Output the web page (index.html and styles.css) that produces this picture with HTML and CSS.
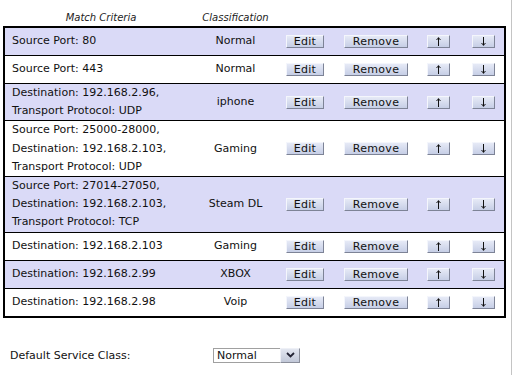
FILE: index.html
```html
<!DOCTYPE html>
<html>
<head>
<meta charset="utf-8">
<link rel="stylesheet" href="styles.css">
</head>
<body>
<div class="page">
  <table class="rules">
    <colgroup>
      <col class="w-crit"><col class="w-class"><col class="w-edit"><col class="w-remove"><col class="w-up"><col class="w-down">
    </colgroup>
    <thead>
      <tr><th>Match Criteria</th><th>Classification</th><th></th><th></th><th></th><th></th></tr>
    </thead>
    <tbody>
      <tr class="alt">
        <td class="crit">Source Port: 80</td><td class="cls">Normal</td>
        <td><button class="btn b-edit">Edit</button></td><td><button class="btn b-remove">Remove</button></td>
        <td><button class="btn b-arrow"><svg width="7" height="9" viewBox="0 0 7 9"><path d="M3.5 0.5V9M1.5 3L3.5 0.8L5.5 3" fill="none" stroke="#111" stroke-width="1"/></svg></button></td>
        <td><button class="btn b-arrow"><svg width="7" height="9" viewBox="0 0 7 9"><path d="M3.5 0V8.5M1.5 6L3.5 8.2L5.5 6" fill="none" stroke="#111" stroke-width="1"/></svg></button></td>
      </tr>
      <tr>
        <td class="crit">Source Port: 443</td><td class="cls">Normal</td>
        <td><button class="btn b-edit">Edit</button></td><td><button class="btn b-remove">Remove</button></td>
        <td><button class="btn b-arrow"><svg width="7" height="9" viewBox="0 0 7 9"><path d="M3.5 0.5V9M1.5 3L3.5 0.8L5.5 3" fill="none" stroke="#111" stroke-width="1"/></svg></button></td>
        <td><button class="btn b-arrow"><svg width="7" height="9" viewBox="0 0 7 9"><path d="M3.5 0V8.5M1.5 6L3.5 8.2L5.5 6" fill="none" stroke="#111" stroke-width="1"/></svg></button></td>
      </tr>
      <tr class="alt">
        <td class="crit">Destination: 192.168.2.96,<br>Transport Protocol: UDP</td><td class="cls">iphone</td>
        <td><button class="btn b-edit">Edit</button></td><td><button class="btn b-remove">Remove</button></td>
        <td><button class="btn b-arrow"><svg width="7" height="9" viewBox="0 0 7 9"><path d="M3.5 0.5V9M1.5 3L3.5 0.8L5.5 3" fill="none" stroke="#111" stroke-width="1"/></svg></button></td>
        <td><button class="btn b-arrow"><svg width="7" height="9" viewBox="0 0 7 9"><path d="M3.5 0V8.5M1.5 6L3.5 8.2L5.5 6" fill="none" stroke="#111" stroke-width="1"/></svg></button></td>
      </tr>
      <tr>
        <td class="crit">Source Port: 25000-28000,<br>Destination: 192.168.2.103,<br>Transport Protocol: UDP</td><td class="cls">Gaming</td>
        <td><button class="btn b-edit">Edit</button></td><td><button class="btn b-remove">Remove</button></td>
        <td><button class="btn b-arrow"><svg width="7" height="9" viewBox="0 0 7 9"><path d="M3.5 0.5V9M1.5 3L3.5 0.8L5.5 3" fill="none" stroke="#111" stroke-width="1"/></svg></button></td>
        <td><button class="btn b-arrow"><svg width="7" height="9" viewBox="0 0 7 9"><path d="M3.5 0V8.5M1.5 6L3.5 8.2L5.5 6" fill="none" stroke="#111" stroke-width="1"/></svg></button></td>
      </tr>
      <tr class="alt">
        <td class="crit">Source Port: 27014-27050,<br>Destination: 192.168.2.103,<br>Transport Protocol: TCP</td><td class="cls">Steam DL</td>
        <td><button class="btn b-edit">Edit</button></td><td><button class="btn b-remove">Remove</button></td>
        <td><button class="btn b-arrow"><svg width="7" height="9" viewBox="0 0 7 9"><path d="M3.5 0.5V9M1.5 3L3.5 0.8L5.5 3" fill="none" stroke="#111" stroke-width="1"/></svg></button></td>
        <td><button class="btn b-arrow"><svg width="7" height="9" viewBox="0 0 7 9"><path d="M3.5 0V8.5M1.5 6L3.5 8.2L5.5 6" fill="none" stroke="#111" stroke-width="1"/></svg></button></td>
      </tr>
      <tr>
        <td class="crit">Destination: 192.168.2.103</td><td class="cls">Gaming</td>
        <td><button class="btn b-edit">Edit</button></td><td><button class="btn b-remove">Remove</button></td>
        <td><button class="btn b-arrow"><svg width="7" height="9" viewBox="0 0 7 9"><path d="M3.5 0.5V9M1.5 3L3.5 0.8L5.5 3" fill="none" stroke="#111" stroke-width="1"/></svg></button></td>
        <td><button class="btn b-arrow"><svg width="7" height="9" viewBox="0 0 7 9"><path d="M3.5 0V8.5M1.5 6L3.5 8.2L5.5 6" fill="none" stroke="#111" stroke-width="1"/></svg></button></td>
      </tr>
      <tr class="alt">
        <td class="crit">Destination: 192.168.2.99</td><td class="cls">XBOX</td>
        <td><button class="btn b-edit">Edit</button></td><td><button class="btn b-remove">Remove</button></td>
        <td><button class="btn b-arrow"><svg width="7" height="9" viewBox="0 0 7 9"><path d="M3.5 0.5V9M1.5 3L3.5 0.8L5.5 3" fill="none" stroke="#111" stroke-width="1"/></svg></button></td>
        <td><button class="btn b-arrow"><svg width="7" height="9" viewBox="0 0 7 9"><path d="M3.5 0V8.5M1.5 6L3.5 8.2L5.5 6" fill="none" stroke="#111" stroke-width="1"/></svg></button></td>
      </tr>
      <tr>
        <td class="crit">Destination: 192.168.2.98</td><td class="cls">Voip</td>
        <td><button class="btn b-edit">Edit</button></td><td><button class="btn b-remove">Remove</button></td>
        <td><button class="btn b-arrow"><svg width="7" height="9" viewBox="0 0 7 9"><path d="M3.5 0.5V9M1.5 3L3.5 0.8L5.5 3" fill="none" stroke="#111" stroke-width="1"/></svg></button></td>
        <td><button class="btn b-arrow"><svg width="7" height="9" viewBox="0 0 7 9"><path d="M3.5 0V8.5M1.5 6L3.5 8.2L5.5 6" fill="none" stroke="#111" stroke-width="1"/></svg></button></td>
      </tr>
    </tbody>
  </table>

  <div class="default-row">
    <span class="default-label">Default Service Class:</span>
    <div class="select">
      <span class="select-value">Normal</span>
      <span class="select-btn"><svg width="9" height="6" viewBox="0 0 9 6"><path d="M1 1L4.5 4.5L8 1" fill="none" stroke="#223" stroke-width="1.8"/></svg></span>
    </div>
  </div>
</div>
</body>
</html>
```
FILE: styles.css
```css
html, body {
  margin: 0;
  padding: 0;
  background: #fff;
}
body {
  font-family: "DejaVu Sans", Verdana, sans-serif;
  font-size: 11px;
  color: #111;
}
.page {
  width: 512px;
  height: 375px;
  border-right: 1px solid #c4c4c4;
  box-sizing: border-box;
  padding-top: 8px;
}
.rules {
  margin-left: 3px;
  width: 501px;
  table-layout: fixed;
  border-collapse: collapse;
}
.w-crit { width: 194px; }
.w-class { width: 75px; }
.w-edit { width: 64px; }
.w-remove { width: 78px; }
.w-up { width: 47px; }
.w-down { width: 43px; }

.rules th {
  font-weight: normal;
  font-style: italic;
  font-size: 10px;
  color: #222;
  height: 18px;
  padding: 0;
  text-align: center;
  vertical-align: middle;
}
.rules td {
  padding: 0;
  height: 27px;
  line-height: 18.2px;
  border-top: 1px solid #000;
  border-bottom: 1px solid #000;
  text-align: center;
  vertical-align: middle;
}
.rules td:first-child { border-left: 2px solid #000; }
.rules td:last-child { border-right: 2px solid #000; }
.rules tbody tr:first-child td { border-top: 2px solid #000; }
.rules tbody tr:last-child td { border-bottom: 2px solid #000; }
.rules tr.alt td { background: #dadaf7; }
.rules td.crit {
  text-align: left;
  padding-left: 7px;
}
.btn {
  font-family: "DejaVu Sans", Verdana, sans-serif;
  font-size: 11px;
  line-height: 11px;
  height: 13px;
  padding: 0;
  margin: 0;
  color: #111;
  background: linear-gradient(#e6eaf6, #c6cee6);
  border: 1px solid;
  border-color: #f4f6fc #7d8396 #7d8396 #f4f6fc;
  display: inline-flex;
  align-items: center;
  justify-content: center;
  vertical-align: middle;
  letter-spacing: 0.3px;
}
.b-edit { width: 38px; }
.b-remove { width: 64px; }
.b-arrow { width: 23px; }

.default-row {
  display: flex;
  align-items: center;
  margin-top: 30px;
  padding-left: 10px;
}
.default-label {
  width: 203px;
}
.select {
  display: flex;
  height: 15px;
}
.select-value {
  width: 63px;
  border: 1px solid #a0a0a0;
  border-right: none;
  background: #fff;
  line-height: 13px;
  padding-left: 3px;
}
.select-btn {
  width: 20px;
  box-sizing: border-box;
  border: 1px solid;
  border-color: #eef0f6 #8a8e9a #8a8e9a #eef0f6;
  background: linear-gradient(#e2e6f0, #c2c8d8);
  display: flex;
  align-items: center;
  justify-content: center;
}
```
